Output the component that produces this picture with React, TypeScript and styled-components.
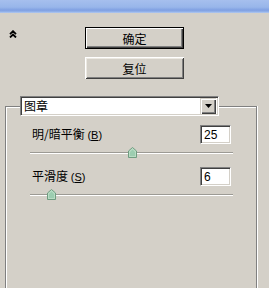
import { createGlobalStyle, styled } from 'styled-components';

const GlobalStyle = createGlobalStyle`
  html, body {
    margin: 0;
    padding: 0;
    background: #d4d0c8;
  }
  body {
    font-family: "Liberation Sans", "Noto Sans CJK SC", sans-serif;
    font-size: 12px;
  }
`;

type SliderProps = {
  pos: number;
};

// 슬라이더 (트랙 + 썸)
const Slider = ({ pos }: SliderProps) => (
  <SliderBox>
    <Track />
    <Thumb style={{ left: `${pos}px` }}>
      <svg width="9" height="11" viewBox="0 0 9 11">
        <path d="M0.5 4 L4.5 0.5 L8.5 4 L8.5 10.5 L0.5 10.5 Z" fill="#b9dcc4" stroke="#6f9c80" />
        <path d="M2 5 L4.5 2.5 L7 5 L7 9 L2 9 Z" fill="#9ccdb0" />
      </svg>
    </Thumb>
  </SliderBox>
);

const App = () => {
  return (
    <Window>
      <GlobalStyle />
      <TitleStrip />
      <Top>
        <Collapse>
          <svg width="8" height="8" viewBox="0 0 8 8">
            <path d="M1 4.2 L4 1.2 L7 4.2 M1 7.5 L4 4.5 L7 7.5" fill="none" stroke="#000" strokeWidth="1.8" />
          </svg>
        </Collapse>
        <Buttons>
          <Button $primary>确定</Button>
          <Button>复位</Button>
        </Buttons>
      </Top>
      <Group>
        <Combo>
          <ComboText>图章</ComboText>
          <DropButton>
            <svg width="7" height="4" viewBox="0 0 7 4">
              <path d="M0 0 L7 0 L3.5 4 Z" fill="#000" />
            </svg>
          </DropButton>
        </Combo>
        <Row $top={9}>
          <Label>
            明/暗平衡 <Key>(<u>B</u>)</Key>
          </Label>
          <NumBox>25</NumBox>
        </Row>
        <Slider pos={98} />
        <Row $top={8}>
          <Label>
            平滑度 <Key>(<u>S</u>)</Key>
          </Label>
          <NumBox>6</NumBox>
        </Row>
        <Slider pos={17} />
      </Group>
    </Window>
  );
};

export default App;

const Window = styled.div`
  width: 269px;
  height: 288px;
  overflow: hidden;
  background: #d4d0c8;
  display: flex;
  flex-direction: column;
`;

const TitleStrip = styled.div`
  height: 13px;
  flex-shrink: 0;
  background: linear-gradient(
    to bottom,
    #a6bfee 0%,
    #98b6ea 55%,
    #7f9fe2 78%,
    #8eaee8 88%,
    #b3c9ef 100%
  );
`;

const Top = styled.div`
  display: flex;
  padding-top: 14px;
`;

const Collapse = styled.div`
  width: 85px;
  padding: 3px 0 0 9px;
  box-sizing: border-box;
  line-height: 0;
`;

const Buttons = styled.div`
  display: flex;
  flex-direction: column;
  gap: 8px;
`;

const Button = styled.button<{ $primary?: boolean }>`
  width: 99px;
  height: 22px;
  margin: 0;
  padding: 0;
  background: #d4d0c8;
  font-family: "Noto Sans CJK SC", sans-serif;
  font-size: 12px;
  color: #000;
  border: ${(p) => (p.$primary ? '1px solid #000' : '0')};
  box-shadow: ${(p) =>
    p.$primary
      ? 'inset 1px 1px #fff, inset -1px -1px #404040, inset -2px -2px #808080'
      : 'inset 1px 1px #fff, inset -1px -1px #404040, inset 2px 2px #ece9e2, inset -2px -2px #808080'};
`;

const Group = styled.div`
  margin: 27px 0 0 5px;
  width: 252px;
  flex: 1;
  box-sizing: border-box;
  border: 1px solid #808080;
  border-bottom: 0;
  box-shadow: inset 1px 1px #fff, 1px 0 #fff;
  display: flex;
  flex-direction: column;
`;

const Combo = styled.div`
  margin: -11px 0 0 14px;
  width: 199px;
  height: 20px;
  box-sizing: border-box;
  background: #fff;
  border-top: 1px solid #808080;
  border-left: 1px solid #808080;
  border-right: 1px solid #fff;
  border-bottom: 1px solid #fff;
  box-shadow: inset 1px 1px #404040, inset -1px -1px #d4d0c8;
  display: flex;
  align-items: center;
  padding: 2px;
`;

const ComboText = styled.span`
  flex: 1;
  font-family: "Noto Sans CJK SC", sans-serif;
  font-size: 12px;
  line-height: 14px;
  padding-left: 1px;
`;

const DropButton = styled.div`
  width: 16px;
  height: 16px;
  box-sizing: border-box;
  background: #d4d0c8;
  box-shadow: inset 1px 1px #d4d0c8, inset 2px 2px #fff, inset -1px -1px #404040, inset -2px -2px #808080;
  display: flex;
  align-items: center;
  justify-content: center;
`;

const Row = styled.div<{ $top: number }>`
  margin-top: ${(p) => p.$top}px;
  display: flex;
  align-items: center;
  padding: 0 25px 0 26px;
  height: 19px;
`;

const Label = styled.span`
  flex: 1;
  font-family: "Noto Sans CJK SC", sans-serif;
  font-size: 12px;
  line-height: 14px;
  color: #000;
`;

const Key = styled.span`
  font-family: "Liberation Sans", sans-serif;
  font-size: 11px;
`;

const NumBox = styled.div`
  width: 31px;
  height: 19px;
  box-sizing: border-box;
  background: #fff;
  border-top: 1px solid #808080;
  border-left: 1px solid #808080;
  border-right: 1px solid #fff;
  border-bottom: 1px solid #fff;
  box-shadow: inset 1px 1px #404040, inset -1px -1px #d4d0c8;
  padding: 2px 0 0 3px;
  font-family: "Liberation Sans", sans-serif;
  font-size: 12px;
  line-height: 14px;
`;

const SliderBox = styled.div`
  position: relative;
  margin: 3px 0 0 24px;
  width: 203px;
  height: 12px;
`;

const Track = styled.div`
  position: absolute;
  left: 0;
  right: 0;
  top: 5px;
  height: 1px;
  background: #9c9a94;
  border-bottom: 1px solid #fff;
`;

const Thumb = styled.div`
  position: absolute;
  top: 0;
  line-height: 0;
`;
